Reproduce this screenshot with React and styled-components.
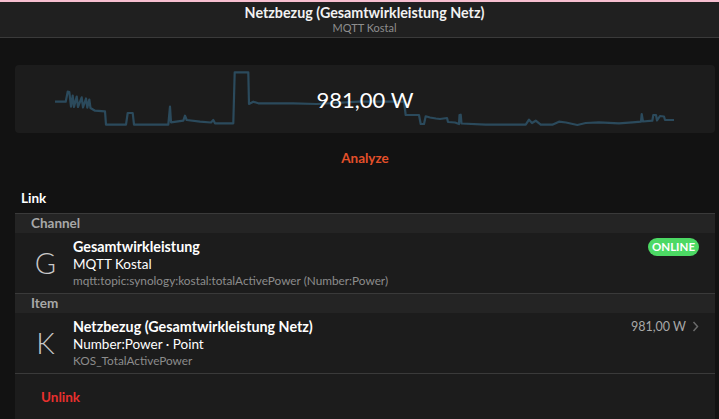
import React from "react";
import styled, { createGlobalStyle } from "styled-components";

const Global = createGlobalStyle`
  html, body { margin: 0; padding: 0; background: #121212; }
  body { font-family: Lato, "Noto Sans", sans-serif; color: #fff; width: 719px; height: 419px; overflow: hidden; }
`;

const Page = styled.div`
  display: flex;
  flex-direction: column;
  height: 419px;
  border-top: 2px solid #f7bfd0;
  box-sizing: border-box;
`;

const Header = styled.header`
  height: 36px;
  background: #202020;
  border-bottom: 1px solid #3a3a3a;
  display: flex;
  flex-direction: column;
  align-items: center;
  justify-content: center;
  padding-left: 10px;
`;

const Title = styled.div`
  font-size: 14.3px;
  font-weight: 700;
  line-height: 16px;
  color: #f2f2f2;
`;

const Subtitle = styled.div`
  font-size: 11px;
  line-height: 14px;
  color: #8e8e8e;
`;

const Content = styled.main`
  flex: 1;
  display: flex;
  flex-direction: column;
  padding: 27px 4px 0 15px;
`;

const ChartCard = styled.div`
  position: relative;
  height: 68px;
  border-radius: 4px;
  background: #1c1c1c;
  display: flex;
  align-items: center;
  justify-content: center;
`;

const Spark = styled.svg`
  position: absolute;
  inset: 0;
  width: 100%;
  height: 100%;
`;

const Value = styled.div`
  position: relative;
  font-size: 22px;
  line-height: 26px;
  color: #fff;
  margin-top: 2px;
`;

const ActionLink = styled.div`
  display: flex;
  justify-content: ${(p) => (p.$left ? "flex-start" : "center")};
  padding: ${(p) => (p.$left ? "0 0 0 26px" : "0")};
  align-items: center;
  height: ${(p) => p.$h}px;
  font-size: 13.5px;
  font-weight: 700;
  color: ${(p) => p.$color};
`;

const BlockTitle = styled.div`
  font-size: 13.5px;
  font-weight: 700;
  line-height: 16px;
  padding: 0 0 0 6px;
  margin: 8px 0 7px;
`;

const List = styled.div`
  flex: 1;
  display: flex;
  flex-direction: column;
  background: #1c1c1c;
  border-top: 1px solid #3a3a3a;
`;

const GroupHeader = styled.div`
  height: 19px;
  background: #242424;
  color: #a8a8a8;
  font-size: 13.5px;
  font-weight: 700;
  line-height: 19px;
  padding-left: 16px;
`;

const Row = styled.div`
  height: 60px;
  display: flex;
  align-items: flex-start;
  border-bottom: 1px solid #3a3a3a;
  padding-right: 16px;
`;

const Letter = styled.div`
  width: 58px;
  flex: none;
  text-align: center;
  padding-left: 3px;
  box-sizing: border-box;
  font-size: 29px;
  font-weight: 300;
  color: #c8c8c8;
  line-height: 60px;
`;

const Texts = styled.div`
  flex: 1;
  display: flex;
  flex-direction: column;
  padding-top: 5px;
`;

const RowTitle = styled.div`
  font-size: 14.3px;
  font-weight: 700;
  line-height: 17px;
  color: #fff;
`;

const RowSub = styled.div`
  font-size: 13.5px;
  line-height: 18px;
  color: #fff;
`;

const RowFoot = styled.div`
  font-size: 11.8px;
  line-height: 15px;
  color: #8c8c8c;
`;

const Badge = styled.div`
  margin-top: 5px;
  background: #4cd964;
  color: #fff;
  font-size: 11.5px;
  font-weight: 700;
  line-height: 18px;
  padding: 0 4px;
  border-radius: 9px;
`;

const After = styled.div`
  margin-top: 6px;
  display: flex;
  align-items: center;
  gap: 6px;
  font-size: 12.5px;
  color: #a8a8a8;
`;

const pts = [
  [55,102.7],[65.7,102.7],[67.7,92.7],[69.3,93],[71,107.7],[72.7,96.7],[74,108],[76.7,97.5],[78,108],[81.7,98.3],[83,108.5],[86,99.5],[87.3,108.7],[89.3,100.5],[90.5,109],
  [95,111.7],[105,112.3],[106,125.7],[126,125.7],[127.7,114],[132.7,114],[134,125.7],[168.3,125.7],[170,107.7],[171,123.3],
  [183.3,121.7],[185,116.7],[186.7,121],[200,122.7],[211,123.5],[213.3,121],[215,124.3],[233.3,124.3],[234.7,73.3],[248.3,73.3],[249,105],[253.3,102.7],[258.3,104.3],[293.3,104.3],[316.7,105],[359,102.7],
  [404,102.7],[405.7,116],[419,116],[420.7,125],[424,125],[425.7,117.3],[430,118.5],[436,119.5],[440,120],[447,119],[448,123],[455,123.5],[459,125],[459.5,116],[460.7,115.7],[461.5,124.5],
  [485.7,125.7],[525.7,125.7],[529,120.7],[532,124],[535.7,121.7],[540.7,125.7],[552.3,125.7],[559,122.7],[566,123.5],[577.3,126],[585.7,124],[599,123.3],[619,124.3],[632.3,123.3],[641,122.7],[641.7,115],[643,122.5],
  [652.3,121.7],[653.3,116],[656,116],[657,121.5],[660,117],[664,117.5],[665,121],[674,121],
];
const d = pts.map((p, i) => (i ? "L" : "M") + p[0] + " " + p[1]).join(" ");

export default function App() {
  return (
    <>
      <Global />
      <Page>
        <Header>
          <Title>Netzbezug (Gesamtwirkleistung Netz)</Title>
          <Subtitle>MQTT Kostal</Subtitle>
        </Header>
        <Content>
          <ChartCard>
            <Spark viewBox="15 66 700 68" preserveAspectRatio="none">
              <path d={d} fill="none" stroke="#2b4a5c" strokeWidth="2.2" strokeLinejoin="round" />
            </Spark>
            <Value>981,00 W</Value>
          </ChartCard>
          <ActionLink $h={49} $color="#e4502a">Analyze</ActionLink>
          <BlockTitle>Link</BlockTitle>
          <List>
            <GroupHeader>Channel</GroupHeader>
            <Row>
              <Letter>G</Letter>
              <Texts>
                <RowTitle>Gesamtwirkleistung</RowTitle>
                <RowSub>MQTT Kostal</RowSub>
                <RowFoot>mqtt:topic:synology:kostal:totalActivePower (Number:Power)</RowFoot>
              </Texts>
              <Badge>ONLINE</Badge>
            </Row>
            <GroupHeader>Item</GroupHeader>
            <Row>
              <Letter>K</Letter>
              <Texts>
                <RowTitle>Netzbezug (Gesamtwirkleistung Netz)</RowTitle>
                <RowSub>Number:Power · Point</RowSub>
                <RowFoot>KOS_TotalActivePower</RowFoot>
              </Texts>
              <After>
                981,00 W
                <svg width="7" height="11" viewBox="0 0 7 11">
                  <path d="M1.5 1 L5.5 5.5 L1.5 10" fill="none" stroke="#6a6a6a" strokeWidth="1.5" />
                </svg>
              </After>
            </Row>
            <ActionLink $left $h={45} $color="#e8302e">Unlink</ActionLink>
          </List>
        </Content>
      </Page>
    </>
  );
}
